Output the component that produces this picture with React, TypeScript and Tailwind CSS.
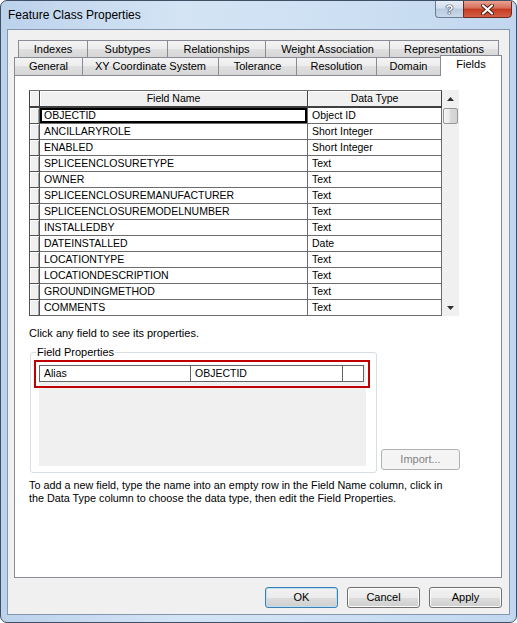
import React from "react";

const rows: [string, string][] = [
  ["OBJECTID", "Object ID"],
  ["ANCILLARYROLE", "Short Integer"],
  ["ENABLED", "Short Integer"],
  ["SPLICEENCLOSURETYPE", "Text"],
  ["OWNER", "Text"],
  ["SPLICEENCLOSUREMANUFACTURER", "Text"],
  ["SPLICEENCLOSUREMODELNUMBER", "Text"],
  ["INSTALLEDBY", "Text"],
  ["DATEINSTALLED", "Date"],
  ["LOCATIONTYPE", "Text"],
  ["LOCATIONDESCRIPTION", "Text"],
  ["GROUNDINGMETHOD", "Text"],
  ["COMMENTS", "Text"],
];

const tabBg =
  "bg-[linear-gradient(#f3f3f3,#ececec_50%,#e0e0e0_50%,#d6d6d6)]";

function Tab({ label, w, last }: { label: string; w: string; last?: boolean }) {
  return (
    <div
      className={`${w} h-full flex items-center justify-center border-t border-l border-[#898c95] ${
        last ? "border-r" : ""
      } ${tabBg} text-[11px] text-black leading-none`}
    >
      {label}
    </div>
  );
}

function Btn({ label, def, w = "w-[73px]" }: { label: string; def?: boolean; w?: string }) {
  return (
    <div
      className={`${w} h-[21px] rounded-[3px] border ${
        def
          ? "border-[#3c7fb1] shadow-[inset_0_0_0_1px_#b9e0f5]"
          : "border-[#707070] shadow-[inset_0_0_0_1px_#fcfcfc]"
      } bg-[linear-gradient(#f2f2f2,#ebebeb_50%,#dddddd_50%,#cfcfcf)] flex items-center justify-center text-[11px] text-black`}
    >
      {label}
    </div>
  );
}

export default function App() {
  return (
    <div className="w-[517px] h-[623px] font-['Liberation_Sans',Arial,sans-serif] bg-white">
      <div className="w-[517px] h-[623px] rounded-[7px] border border-[#3f5066] bg-[linear-gradient(90deg,#bcd2eb,#d4e4f5_35%,#cde0f3_65%,#c2d7ef)] flex flex-col overflow-hidden">
        {/* Title bar */}
        <div className="h-[28px] flex justify-between items-start shrink-0">
          <span className="pl-[7px] pt-[6px] text-[12px] text-black leading-[16px]">
            Feature Class Properties
          </span>
          <div className="flex h-[18px] mr-[4px] -mt-px">
            <div className="w-[28px] h-full rounded-bl-[4px] border border-r-0 border-[#6b7d93] bg-[linear-gradient(#e6eef7,#d2deec_45%,#b8cadf_50%,#cad9ea)] flex items-center justify-center">
              <span className="text-[13px] font-bold text-white leading-none [text-shadow:0_0_1px_#1d2b3c,0_0_1px_#1d2b3c,0_0_1px_#1d2b3c]">
                ?
              </span>
            </div>
            <div className="w-[49px] h-full rounded-br-[4px] border border-[#6e2a1f] bg-[linear-gradient(#e9a192,#d76e59_45%,#c4391f_50%,#d35f47)] flex items-center justify-center">
              <svg width="13" height="11" viewBox="0 0 13 11">
                <path d="M2 1.5 L11 9.5 M11 1.5 L2 9.5" stroke="#4a1a12" strokeWidth="4" strokeLinecap="round" />
                <path d="M2 1.5 L11 9.5 M11 1.5 L2 9.5" stroke="#ffffff" strokeWidth="2.2" strokeLinecap="round" />
              </svg>
            </div>
          </div>
        </div>

        {/* Client area */}
        <div className="flex-1 mx-[6px] mb-[7px] border border-[#8396ad] bg-[#f0f0f0] flex flex-col pl-[6px] pr-[7px] pt-[10px]">
          {/* Tabs row 1 */}
          <div className="h-[17px] flex pl-[4px]">
            <Tab label="Indexes" w="w-[69px]" />
            <Tab label="Subtypes" w="w-[80px]" />
            <Tab label="Relationships" w="w-[98px]" />
            <Tab label="Weight Association" w="w-[124px]" />
            <Tab label="Representations" w="w-[110px]" last />
          </div>
          {/* Tabs row 2 */}
          <div className="h-[18px] flex items-start">
            <Tab label="General" w="w-[68px]" />
            <Tab label="XY Coordinate System" w="w-[136px]" />
            <Tab label="Tolerance" w="w-[78px]" />
            <Tab label="Resolution" w="w-[80px]" />
            <Tab label="Domain" w="w-[64px]" />
            <div className="relative z-10 w-[62px] h-[21px] -mt-[2px] border-t border-l border-r border-[#898c95] bg-white flex justify-center pt-[2px] text-[11px] leading-[13px] text-black">
              Fields
            </div>
          </div>

          {/* Panel */}
          <div className="h-[503px] border border-[#898c95] bg-white pl-[14px] pt-[14px] flex flex-col">
            {/* Grid */}
            <div className="flex w-[430px]">
              <div className="w-[413px] flex flex-col text-[10.5px] text-black">
                {/* header */}
                <div className="flex h-[18px] border-t border-[#6d6d6d]">
                  <div className="w-[11px] h-full border-l border-r border-b-2 border-[#404040] bg-[#f0f0f0] shadow-[inset_1px_1px_0_#fff]" />
                  <div className="w-[268px] h-full border-r border-b-2 border-[#404040] bg-[#f0f0f0] shadow-[inset_1px_1px_0_#fff] flex items-center justify-center">
                    Field Name
                  </div>
                  <div className="w-[134px] h-full border-r border-b-2 border-[#404040] bg-[#f0f0f0] shadow-[inset_1px_1px_0_#fff] flex items-center justify-center">
                    Data Type
                  </div>
                </div>
                {rows.map(([name, type], i) => (
                  <div key={name} className="flex h-[16px]">
                    <div className="w-[11px] h-full border-l border-r border-b border-[#505050] bg-[#f0f0f0] shadow-[inset_1px_1px_0_#fff,inset_-1px_0_0_#a0a0a0]" />
                    <div
                      className={`w-[268px] h-full border-r border-b border-[#6d6d6d] flex items-center pl-[4px] whitespace-nowrap ${
                        i === 0 ? "shadow-[inset_0_0_0_2px_#000]" : ""
                      }`}
                    >
                      {name}
                    </div>
                    <div className="w-[134px] h-full border-r border-b border-[#6d6d6d] flex items-center pl-[4px] whitespace-nowrap">
                      {type}
                    </div>
                  </div>
                ))}
              </div>
              {/* Scrollbar */}
              <div className="w-[17px] bg-[#f0f0f0] flex flex-col items-center">
                <div className="h-[18px] flex items-center justify-center">
                  <svg width="7" height="4" viewBox="0 0 7 4">
                    <path d="M0 4 L3.5 0 L7 4 Z" fill="#303030" />
                  </svg>
                </div>
                <div className="w-[15px] h-[16px] rounded-[2px] border border-[#979797] bg-[linear-gradient(90deg,#f4f4f4,#e6e6e6_50%,#d9d9d9_50%,#d2d2d2)]" />
                <div className="flex-1" />
                <div className="h-[16px] flex items-center justify-center">
                  <svg width="7" height="4" viewBox="0 0 7 4">
                    <path d="M0 0 L3.5 4 L7 0 Z" fill="#303030" />
                  </svg>
                </div>
              </div>
            </div>

            <p className="mt-[11px] text-[11px] leading-[13px] text-black">
              Click any field to see its properties.
            </p>

            {/* Field properties + Import */}
            <div className="flex items-end mt-[12px] ml-[1px]">
              <div className="relative w-[347px] h-[121px] border border-[#d5dfe5] rounded-[3px] pl-[8px] pt-[12px]">
                <span className="absolute -top-[7px] left-[5px] bg-white px-[1px] text-[11px] leading-[13px] text-black">
                  Field Properties
                </span>
                <div className="w-[327px] h-[101px] bg-[#f0f0f0]">
                  <div className="flex w-[325px] h-[17px] border border-[#646464] bg-white text-[10.5px] text-black">
                    <div className="w-[151px] h-full border-r border-[#646464] flex items-center pl-[4px]">
                      Alias
                    </div>
                    <div className="w-[152px] h-full border-r border-[#646464] flex items-center pl-[4px]">
                      OBJECTID
                    </div>
                    <div className="flex-1 h-full" />
                  </div>
                </div>
                <div className="absolute left-[3px] top-[7px] w-[336px] h-[28px] border-2 border-[#c00000]" />
              </div>
              <div className="ml-[4px] mb-[3px] w-[79px] h-[21px] rounded-[3px] border border-[#adb2b5] bg-[#f4f4f4] flex items-center justify-center text-[11px] text-[#838383]">
                Import...
              </div>
            </div>

            <p className="mt-[6px] text-[10.8px] leading-[13px] text-black whitespace-nowrap">
              To add a new field, type the name into an empty row in the Field Name column, click in
              <br />
              the Data Type column to choose the data type, then edit the Field Properties.
            </p>
          </div>

          {/* Buttons */}
          <div className="flex justify-end gap-[9px] mt-[9px]">
            <Btn label="OK" def />
            <Btn label="Cancel" />
            <Btn label="Apply" />
          </div>
        </div>
      </div>
    </div>
  );
}
